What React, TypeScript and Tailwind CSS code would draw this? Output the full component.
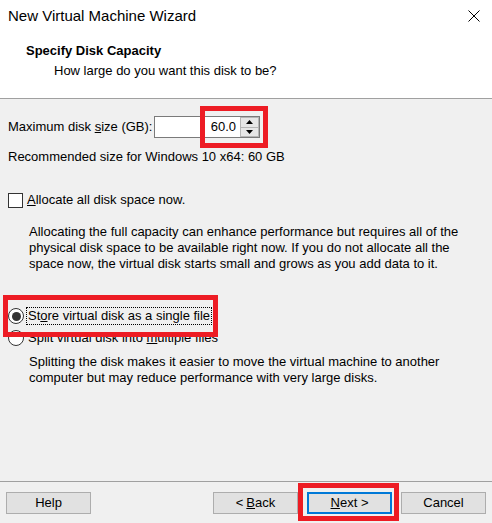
export default function App() {
  const btn =
    "w-[85px] h-[22px] bg-[#e1e1e1] border border-[#adadad] flex items-center justify-center text-black";

  return (
    <div
      className="relative w-[492px] h-[523px] bg-[#f0f0f0] flex flex-col text-[13px] leading-[16px] text-black overflow-hidden"
      style={{ fontFamily: '"Liberation Sans", Arial, sans-serif' }}
    >
      {/* Header */}
      <div className="bg-white h-[99px] border-b border-[#a0a0a0] flex flex-col">
        <div className="h-[32px] flex items-center justify-between pl-2 pr-[12px]">
          <span className="text-[15px]">New Virtual Machine Wizard</span>
          <svg width="12" height="12" viewBox="0 0 12 12">
            <path d="M0.5 0.5 L11.5 11.5 M11.5 0.5 L0.5 11.5" stroke="#000" strokeWidth="1" />
          </svg>
        </div>
        <div className="mt-[11px] pl-[26px] font-bold">Specify Disk Capacity</div>
        <div className="mt-[4px] pl-[54px]">How large do you want this disk to be?</div>
      </div>

      {/* Body */}
      <div className="flex flex-col px-2">
        <div className="mt-[17px] h-[22px] flex items-center">
          <span className="w-[146px] whitespace-nowrap">
            Maximum disk <u>s</u>ize (GB):
          </span>
          <div className="w-[106px] h-[22px] bg-white border border-[#7a7a7a] flex items-center justify-end">
            <span className="mr-[4px]">60.0</span>
            <div className="w-[19px] h-[20px] flex flex-col">
              <div className="flex-1 bg-[#e6e6e6] border border-[#b5b5b5] flex items-center justify-center">
                <svg width="7" height="4" viewBox="0 0 7 4">
                  <path d="M0 4 L3.5 0 L7 4 Z" fill="#000" />
                </svg>
              </div>
              <div className="flex-1 bg-[#e6e6e6] border border-t-0 border-[#b5b5b5] flex items-center justify-center">
                <svg width="7" height="4" viewBox="0 0 7 4">
                  <path d="M0 0 L3.5 4 L7 0 Z" fill="#000" />
                </svg>
              </div>
            </div>
          </div>
        </div>

        <div className="mt-[11px]">Recommended size for Windows 10 x64: 60 GB</div>

        <div className="mt-[27px] h-[16px] flex items-center">
          <div className="w-[15px] h-[15px] bg-white border border-[#333]" />
          <span className="ml-[4px]">
            <u>A</u>llocate all disk space now.
          </span>
        </div>

        <p className="mt-[16px] pl-[21px] whitespace-nowrap">
          Allocating the full capacity can enhance performance but requires all of the
          <br />
          physical disk space to be available right now. If you do not allocate all the
          <br />
          space now, the virtual disk starts small and grows as you add data to it.
        </p>

        <div className="mt-[36px] h-[16px] flex items-center">
          <div className="w-[16px] h-[16px] rounded-full bg-white border border-[#333] flex items-center justify-center">
            <div className="w-[9px] h-[9px] rounded-full bg-[#333]" />
          </div>
          <span className="ml-[3px] px-[1px] outline outline-1 outline-dotted outline-black">
            St<u>o</u>re virtual disk as a single file
          </span>
        </div>

        <div className="mt-[6px] h-[16px] flex items-center">
          <div className="w-[16px] h-[16px] rounded-full bg-white border border-[#333]" />
          <span className="ml-[4px]">
            Split virtual disk into <u>m</u>ultiple files
          </span>
        </div>

        <p className="mt-[8px] pl-[21px] whitespace-nowrap">
          Splitting the disk makes it easier to move the virtual machine to another
          <br />
          computer but may reduce performance with very large disks.
        </p>
      </div>

      <div className="flex-1" />

      {/* Footer */}
      <div className="border-t border-[#a0a0a0] pt-[10px] pb-[9px] px-[6px] flex items-center">
        <div className={btn}>Help</div>
        <div className="flex-1" />
        <div className={btn}>
          &lt; <u className="ml-[3px]">B</u>ack
        </div>
        <div className="w-[9px]" />
        <div className="w-[85px] h-[22px] bg-[#e1e1e1] border-2 border-[#0078d7] flex items-center justify-center">
          <u>N</u>ext &gt;
        </div>
        <div className="w-[9px]" />
        <div className={btn}>Cancel</div>
      </div>

      {/* Annotation boxes */}
      <div className="absolute left-[200px] top-[106px] w-[68px] h-[42px] border-[5px] border-[#ed1c24]" />
      <div className="absolute left-[3px] top-[295px] w-[215px] h-[42px] border-[5px] border-[#ed1c24]" />
      <div className="absolute left-[298px] top-[483px] w-[101px] h-[38px] border-[5px] border-[#ed1c24]" />
    </div>
  );
}
